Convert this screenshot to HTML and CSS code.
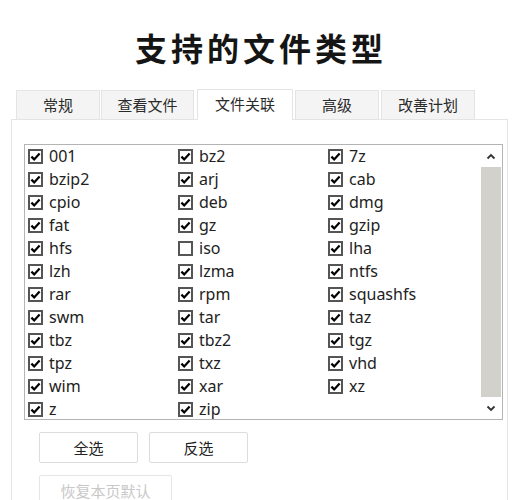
FILE: index.html
```html
<!DOCTYPE html>
<html lang="zh-CN">
<head>
    <meta charset="UTF-8">
    <meta name="viewport" content="width=device-width, initial-scale=1.0">
    <title>支持的文件类型</title>
    <link rel="stylesheet" href="styles.css">
</head>
<body>
    <h1 class="title">支持的文件类型</h1>

    <nav class="tabs">
        <div class="tab t1">常规</div>
        <div class="tab t2">查看文件</div>
        <div class="tab t3 active">文件关联</div>
        <div class="tab t4">高级</div>
        <div class="tab t5">改善计划</div>
    </nav>

    <div class="panel">
        <div class="listbox">
            <div class="items" id="items"></div>
            <div class="scrollbar">
                <div class="arrow">
                    <svg width="10" height="7" viewBox="0 0 10 7"><path d="M1.5 5.5 L5 2 L8.5 5.5" fill="none" stroke="#333" stroke-width="1.8"/></svg>
                </div>
                <div class="thumb"></div>
                <div class="arrow">
                    <svg width="10" height="7" viewBox="0 0 10 7"><path d="M1.5 1.5 L5 5 L8.5 1.5" fill="none" stroke="#333" stroke-width="1.8"/></svg>
                </div>
            </div>
        </div>

        <div class="actions">
            <button class="btn">全选</button>
            <button class="btn">反选</button>
        </div>
        <div class="actions">
            <button class="btn btn-wide" disabled>恢复本页默认</button>
        </div>
    </div>

    <script>
        // 文件类型列表，按行排列（每行三列）
        var types = [
            '001', 'bz2', '7z',
            'bzip2', 'arj', 'cab',
            'cpio', 'deb', 'dmg',
            'fat', 'gz', 'gzip',
            'hfs', 'iso', 'lha',
            'lzh', 'lzma', 'ntfs',
            'rar', 'rpm', 'squashfs',
            'swm', 'tar', 'taz',
            'tbz', 'tbz2', 'tgz',
            'tpz', 'txz', 'vhd',
            'wim', 'xar', 'xz',
            'z', 'zip'
        ];
        var unchecked = ['iso'];
        var tick = '<svg width="11" height="11" viewBox="0 0 11 11"><path d="M1.4 5.6 L4.2 8.4 L9.6 2.4" fill="none" stroke="#000" stroke-width="2.2"/></svg>';

        var items = document.getElementById('items');
        types.forEach(function(name) {
            var on = unchecked.indexOf(name) === -1;
            var row = document.createElement('label');
            row.className = 'item';
            row.innerHTML = '<span class="box">' + (on ? tick : '') + '</span><span class="name">' + name + '</span>';
            items.appendChild(row);
        });
    </script>
</body>
</html>
```

FILE: styles.css
```css
body {
    margin: 0;
    background: #fff;
    color: #222;
    font-family: "Noto Sans", "Noto Sans CJK SC", sans-serif;
}

.title {
    margin: 27px 0 0;
    height: 40px;
    line-height: 40px;
    text-align: center;
    font-family: "Noto Sans CJK SC", sans-serif;
    font-size: 32px;
    font-weight: 700;
    letter-spacing: 4px;
    padding-left: 4px;
    color: #151515;
}

/* 标签页 */
.tabs {
    display: flex;
    align-items: flex-end;
    margin: 22px 0 0 16px;
    height: 30px;
}
.tab {
    box-sizing: border-box;
    height: 29px;
    line-height: 28px;
    text-align: center;
    font-family: "Noto Sans CJK SC", sans-serif;
    font-size: 15px;
    color: #2a2a2a;
    background: #f4f4f4;
    border: 1px solid #e4e4e4;
    border-bottom: none;
}
.tab.active {
    height: 31px;
    background: #fff;
    position: relative;
    z-index: 1;
    margin-bottom: -1px;
}
.t1 { width: 84px; margin-right: 1px; }
.t2 { width: 93px; margin-right: 3px; }
.t3 { width: 96px; margin-right: 2px; }
.t4 { width: 84px; margin-right: 2px; }
.t5 { width: 94px; }

/* 面板 */
.panel {
    margin: 0 10px 0 11px;
    border: 1px solid #e4e4e4;
    padding: 24px 4px 20px 12px;
    min-height: 400px;
}

.listbox {
    display: flex;
    border: 1px solid #b4b4b4;
    height: 274px;
    overflow: hidden;
}
.items {
    flex: 1;
    display: grid;
    grid-template-columns: 150px 150px 150px;
    grid-auto-rows: 23px;
    padding-left: 3px;
}
.item {
    display: flex;
    align-items: center;
    gap: 6px;
    font-size: 16px;
    color: #222;
}
.box {
    box-sizing: border-box;
    width: 15px;
    height: 15px;
    border: 2px solid #555;
    background: #fff;
    display: flex;
    align-items: center;
    justify-content: center;
}
.box svg { display: block; }
.name { line-height: 20px; margin-top: -1px; }

.scrollbar {
    width: 20px;
    margin-right: 1px;
    display: flex;
    flex-direction: column;
}
.arrow {
    height: 22px;
    display: flex;
    align-items: center;
    justify-content: center;
}
.thumb {
    flex: 1;
    background: #d3d1cc;
}

/* 按钮 */
.actions {
    display: flex;
    gap: 11px;
    margin: 12px 0 0 15px;
}
.btn {
    width: 99px;
    height: 31px;
    border: 1px solid #dcdcdc;
    border-radius: 2px;
    background: #fff;
    font-family: "Noto Sans CJK SC", sans-serif;
    font-size: 15px;
    color: #222;
    padding: 0;
}
.btn-wide { width: 133px; }
.btn:disabled { color: #c8c8c8; border-color: #e6e6e6; }
```
